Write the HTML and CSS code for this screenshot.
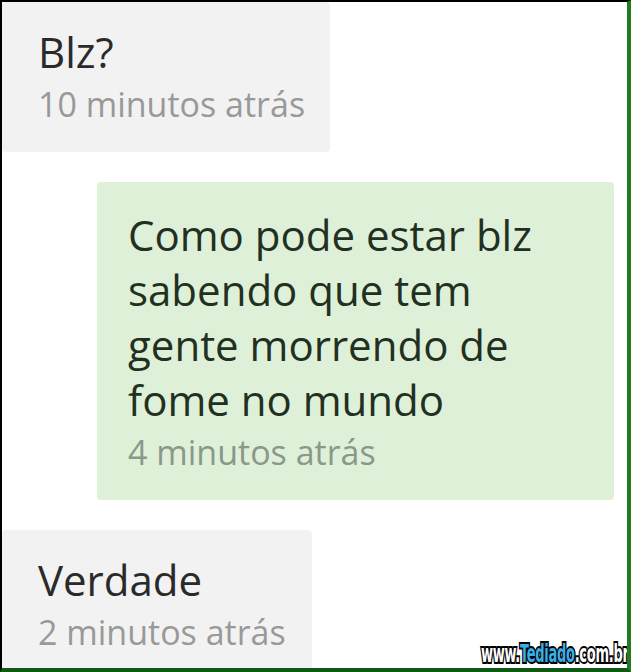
FILE: index.html
```html
<!DOCTYPE html>
<html lang="pt-BR">
<head>
<meta charset="utf-8">
<title>Chat</title>
<link rel="stylesheet" href="styles.css">
</head>
<body>
<div class="frame">
  <div class="chat">
    <div class="bubble in first">
      <div class="msg">Blz?</div>
      <div class="meta">10 minutos atrás</div>
    </div>
    <div class="bubble out">
      <div class="msg">Como pode estar blz<br>sabendo que tem<br>gente morrendo de<br>fome no mundo</div>
      <div class="meta">4 minutos atrás</div>
    </div>
    <div class="bubble in last">
      <div class="msg">Verdade</div>
      <div class="meta">2 minutos atrás</div>
    </div>
  </div>
  <div class="watermark">www.<span class="brand">Tediado</span>.com.br</div>
</div>
</body>
</html>
```
FILE: styles.css
```css
html, body {
  margin: 0;
  padding: 0;
  background: #fff;
}
.frame {
  position: relative;
  width: 631px;
  height: 672px;
  box-sizing: border-box;
  border-top: 2px solid #000;
  border-left: 2px solid #000;
  border-right: 4px solid #1f7d1f;
  border-bottom: 4px solid #0f5a12;
  overflow: hidden;
  font-family: "Open Sans", "Noto Sans", sans-serif;
}
.chat {
  display: flex;
  flex-direction: column;
  gap: 30px;
}
.bubble {
  box-sizing: border-box;
  border-radius: 4px;
}
.bubble.in {
  background: #f2f2f2;
  padding: 22px 20px 0 36px;
}
.bubble.first {
  width: 328px;
  height: 150px;
}
.bubble.out {
  background: #dff0d8;
  margin-left: 95px;
  width: 517px;
  height: 318px;
  padding: 25px 20px 0 31px;
}
.bubble.last {
  width: 310px;
  height: 140px;
}
.msg {
  font-size: 42px;
  font-weight: 500;
  line-height: 55px;
  color: #2a2a2a;
}
.out .msg {
  color: #223022;
}
.meta {
  font-size: 34px;
  font-weight: 500;
  line-height: 50px;
  color: #999;
}
.out .meta {
  color: #8a988a;
}
.watermark {
  position: absolute;
  right: -2px;
  bottom: 0;
  font-family: "DejaVu Sans Condensed", "DejaVu Sans", sans-serif;
  font-weight: bold;
  font-size: 25px;
  line-height: 28px;
  letter-spacing: -0.5px;
  color: #fff;
  -webkit-text-stroke: 4px #000;
  paint-order: stroke fill;
  transform: scaleX(0.58);
  transform-origin: right bottom;
}
.watermark .brand {
  color: #3aaee6;
}
```
